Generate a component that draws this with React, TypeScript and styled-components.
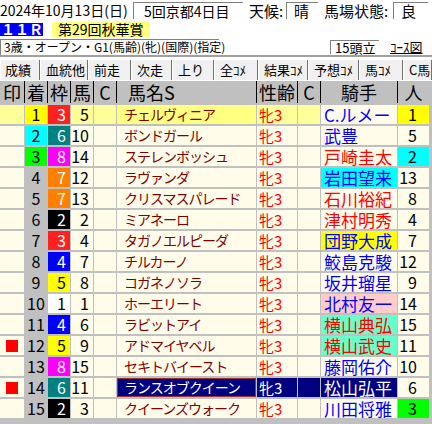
import React from 'react';
import styled, { createGlobalStyle } from 'styled-components';

const GlobalStyle = createGlobalStyle`
  html, body { margin: 0; padding: 0; background: #ffffff; }
  body { font-family: "Noto Sans CJK JP", "Noto Sans", sans-serif; color: #000; }
  * { box-sizing: border-box; }
`;

const Page = styled.div`
  width: 432px;
  height: 424px;
  overflow: hidden;
  background: #ffffff;
  display: flex;
  flex-direction: column;
`;

const InfoRow = styled.div<{ $h: number }>`
  display: flex;
  align-items: center;
  height: ${(p) => p.$h}px;
  line-height: 1;
  white-space: nowrap;
`;

const DateText = styled.div`
  width: 133px;
  font-size: 14px;
`;

const Label = styled.div<{ $w: number }>`
  width: ${(p) => p.$w}px;
  font-size: 15px;
  padding-left: 6px;
`;

const Inset = styled.div<{ $w: number; $h: number; $pl?: number; $fs?: number; $ls?: number }>`
  width: ${(p) => p.$w}px;
  height: ${(p) => p.$h}px;
  background: #ffffff;
  border-top: 1px solid #808080;
  border-left: 1px solid #808080;
  padding-left: ${(p) => p.$pl ?? 4}px;
  font-size: ${(p) => p.$fs ?? 15}px;
  letter-spacing: ${(p) => p.$ls ?? 0}px;
  display: flex;
  align-items: center;
`;

const RaceNo = styled.div`
  width: 43px;
  height: 13px;
  background: #0000ff;
  color: #ffffff;
  font-size: 14px;
  font-weight: bold;
  display: flex;
  align-items: center;
  padding-left: 1px;
`;

const RaceTitle = styled.div`
  margin-left: 9px;
  width: 98px;
  height: 15px;
  background: #ffff80;
  font-size: 14px;
  display: flex;
  align-items: center;
  padding-left: 6px;
`;

const Spacer = styled.div<{ $w: number }>`
  width: ${(p) => p.$w}px;
  flex: none;
`;

const CourseLink = styled.a`
  font-size: 13px;
  color: #000;
  text-decoration: underline;
  margin-left: 11px;
`;

const Divider = styled.div`
  height: 2px;
  background: #a0a0a0;
  margin-bottom: 3px;
`;

const TabBar = styled.div`
  display: flex;
  height: 20px;
  background: #f0f0f0;
  overflow: hidden;
`;

const Tab = styled.div<{ $w: number; $first?: boolean }>`
  flex: none;
  width: ${(p) => p.$w}px;
  height: 20px;
  font-size: 13px;
  line-height: 20px;
  padding-left: ${(p) => (p.$first ? 5 : 6)}px;
  border-right: 1px solid #707070;
  box-shadow: inset 1px 0 0 #ffffff;
  white-space: nowrap;
  overflow: hidden;
`;

const COLS = '24px 22px 22px 22px 22px 139px 40px 22px 76px 31px';

const TableWrap = styled.div`
  margin-top: 1px;
  background: #c0c0c0;
  width: 432px;
  flex: 1;
`;

const HeadRow = styled.div`
  display: grid;
  grid-template-columns: ${COLS};
  column-gap: 1px;
  width: 429px;
  height: 22px;
  background: #000000;
`;

const HeadCell = styled.div<{ $pl?: number }>`
  background: #c0c0c0;
  font-size: 18px;
  line-height: 22px;
  text-align: ${(p) => (p.$pl !== undefined ? 'left' : 'center')};
  padding-left: ${(p) => p.$pl ?? 0}px;
  white-space: nowrap;
  overflow: hidden;
`;

const Body = styled.div`
  display: grid;
  grid-template-columns: ${COLS};
  grid-auto-rows: 19px;
  column-gap: 1px;
  row-gap: 2px;
  padding-top: 2px;
  width: 429px;
`;

const Cell = styled.div<{ $bg?: string; $color?: string }>`
  background: ${(p) => p.$bg ?? '#fffcea'};
  color: ${(p) => p.$color ?? '#000'};
  white-space: nowrap;
  overflow: hidden;
  display: flex;
  align-items: center;
  line-height: 19px;
`;

const MarkCell = styled(Cell)`
  justify-content: center;
`;

const MarkSquare = styled.span`
  width: 12px;
  height: 12px;
  background: #ff0000;
  display: block;
`;

const RankCell = styled(Cell)`
  justify-content: center;
  font-size: 16px;
`;

const NumCell = styled(Cell)`
  justify-content: flex-end;
  padding-right: 4px;
  font-size: 16px;
`;

const NameCell = styled(Cell)<{ $border?: string }>`
  font-size: 14px;
  letter-spacing: -1px;
  border: ${(p) => (p.$border ? `1px solid ${p.$border}` : 'none')};
  padding-left: ${(p) => (p.$border ? 6 : 7)}px;
`;

const SexCell = styled(Cell)`
  font-size: 15px;
  padding-left: 2px;
`;

const JockeyCell = styled(Cell)`
  font-size: 17px;
  padding-left: 3px;
`;

const PopCell = styled(Cell)`
  justify-content: flex-end;
  padding-right: 12px;
  font-size: 16px;
`;

const FRAME: Record<number, [string, string]> = {
  1: ['#ffffff', '#000000'],
  2: ['#000000', '#ffffff'],
  3: ['#ff2020', '#ffffff'],
  4: ['#0000ff', '#ffffff'],
  5: ['#ffff00', '#000000'],
  6: ['#008080', '#ffffff'],
  7: ['#ff8000', '#ffffff'],
  8: ['#ff00ff', '#ffffff'],
};

const PLACE: Record<number, string> = { 1: '#ffff00', 2: '#00ffff', 3: '#00ff00' };

type Horse = {
  mark?: boolean;
  rank: number;
  frame: number;
  num: number;
  name: string;
  jockey: string;
  jc: string;
  jbg?: string;
  pop: number;
  hl?: 'first' | 'navy';
};

const BLUE = '#0000ff';
const RED = '#ff0000';

const horses: Horse[] = [
  { rank: 1, frame: 3, num: 5, name: 'チェルヴィニア', jockey: 'C.ルメー', jc: BLUE, pop: 1, hl: 'first' },
  { rank: 2, frame: 6, num: 10, name: 'ボンドガール', jockey: '武豊', jc: BLUE, pop: 5 },
  { rank: 3, frame: 8, num: 14, name: 'ステレンボッシュ', jockey: '戸崎圭太', jc: RED, pop: 2 },
  { rank: 4, frame: 7, num: 12, name: 'ラヴァンダ', jockey: '岩田望来', jc: BLUE, jbg: '#00ffff', pop: 13 },
  { rank: 5, frame: 7, num: 13, name: 'クリスマスパレード', jockey: '石川裕紀', jc: RED, pop: 8 },
  { rank: 6, frame: 2, num: 2, name: 'ミアネーロ', jockey: '津村明秀', jc: RED, pop: 4 },
  { rank: 7, frame: 3, num: 4, name: 'タガノエルピーダ', jockey: '団野大成', jc: BLUE, jbg: '#ffff00', pop: 7 },
  { rank: 8, frame: 4, num: 7, name: 'チルカーノ', jockey: '鮫島克駿', jc: BLUE, pop: 12 },
  { rank: 9, frame: 5, num: 8, name: 'コガネノソラ', jockey: '坂井瑠星', jc: BLUE, pop: 9 },
  { rank: 10, frame: 1, num: 1, name: 'ホーエリート', jockey: '北村友一', jc: BLUE, jbg: '#ffcccc', pop: 14 },
  { rank: 11, frame: 4, num: 6, name: 'ラビットアイ', jockey: '横山典弘', jc: RED, jbg: '#66ffcc', pop: 15 },
  { mark: true, rank: 12, frame: 5, num: 9, name: 'アドマイヤベル', jockey: '横山武史', jc: RED, jbg: '#66ffcc', pop: 11 },
  { rank: 13, frame: 8, num: 15, name: 'セキトバイースト', jockey: '藤岡佑介', jc: BLUE, pop: 10 },
  { mark: true, rank: 14, frame: 6, num: 11, name: 'ランスオブクイーン', jockey: '松山弘平', jc: '#ffffff', jbg: '#000080', pop: 6, hl: 'navy' },
  { rank: 15, frame: 2, num: 3, name: 'クイーンズウォーク', jockey: '川田将雅', jc: BLUE, pop: 3 },
];

const tabs: [string, number][] = [
  ['成績', 40],
  ['血統他', 48],
  ['前走', 43],
  ['次走', 41],
  ['上り', 42],
  ['全ｺﾒ', 44],
  ['結果ｺﾒ', 50],
  ['予想ｺﾒ', 51],
  ['馬ｺﾒ', 44],
  ['C馬ｺﾒ', 29],
];

const LIGHT = '#ffff99';
const NAVY = '#000080';

function HorseRow({ h }: { h: Horse }) {
  const first = h.hl === 'first';
  const navy = h.hl === 'navy';
  const soft = first ? LIGHT : undefined;
  const [fbg, ffg] = FRAME[h.frame];
  return (
    <>
      <MarkCell $bg={soft}>{h.mark && <MarkSquare />}</MarkCell>
      <RankCell $bg={PLACE[h.rank] ?? '#c0c0c0'}>{h.rank}</RankCell>
      <NumCell $bg={fbg} $color={ffg}>{h.frame}</NumCell>
      <NumCell $bg={soft}>{h.num}</NumCell>
      <Cell $bg={soft} />
      <NameCell
        $bg={navy ? NAVY : first ? '#ffff80' : undefined}
        $color={navy ? '#ffffff' : '#800000'}
        $border={navy ? '#993333' : undefined}
      >
        {h.name}
      </NameCell>
      <SexCell $bg={navy ? NAVY : soft} $color={navy ? '#ffffff' : RED}>牝3</SexCell>
      <Cell $bg={navy ? NAVY : soft} />
      <JockeyCell $bg={h.jbg} $color={h.jc}>{h.jockey}</JockeyCell>
      <PopCell $bg={PLACE[h.pop]}>{h.pop}</PopCell>
    </>
  );
}

export default function App() {
  return (
    <Page>
      <GlobalStyle />
      <InfoRow $h={20}>
        <DateText>2024年10月13日(日)</DateText>
        <Inset $w={110} $h={17} $pl={10} $fs={14}>5回京都4日目</Inset>
        <Label $w={43}>天候:</Label>
        <Inset $w={32} $h={17} $pl={7}>晴</Inset>
        <Label $w={75}>馬場状態:</Label>
        <Inset $w={35} $h={17} $pl={7}>良</Inset>
      </InfoRow>
      <InfoRow $h={18}>
        <RaceNo>１１Ｒ</RaceNo>
        <RaceTitle>第29回秋華賞</RaceTitle>
      </InfoRow>
      <InfoRow $h={17}>
        <Inset $w={219} $h={16} $pl={3} $fs={12}>3歳・オープン・G1(馬齢)(牝)(国際)(指定)</Inset>
        <Spacer $w={111} />
        <Inset $w={49} $h={14} $pl={4} $fs={13}>15頭立</Inset>
        <CourseLink href="#">ｺｰｽ図</CourseLink>
      </InfoRow>
      <Divider />
      <TabBar>
        {tabs.map(([t, w], i) => (
          <Tab key={t} $w={w} $first={i === 0}>{t}</Tab>
        ))}
      </TabBar>
      <TableWrap>
        <HeadRow>
          <HeadCell>印</HeadCell>
          <HeadCell>着</HeadCell>
          <HeadCell>枠</HeadCell>
          <HeadCell>馬</HeadCell>
          <HeadCell>C</HeadCell>
          <HeadCell $pl={11}>馬名S</HeadCell>
          <HeadCell>性齢</HeadCell>
          <HeadCell>C</HeadCell>
          <HeadCell>騎手</HeadCell>
          <HeadCell>人</HeadCell>
        </HeadRow>
        <Body>
          {horses.map((h) => (
            <HorseRow key={h.rank} h={h} />
          ))}
        </Body>
      </TableWrap>
    </Page>
  );
}
